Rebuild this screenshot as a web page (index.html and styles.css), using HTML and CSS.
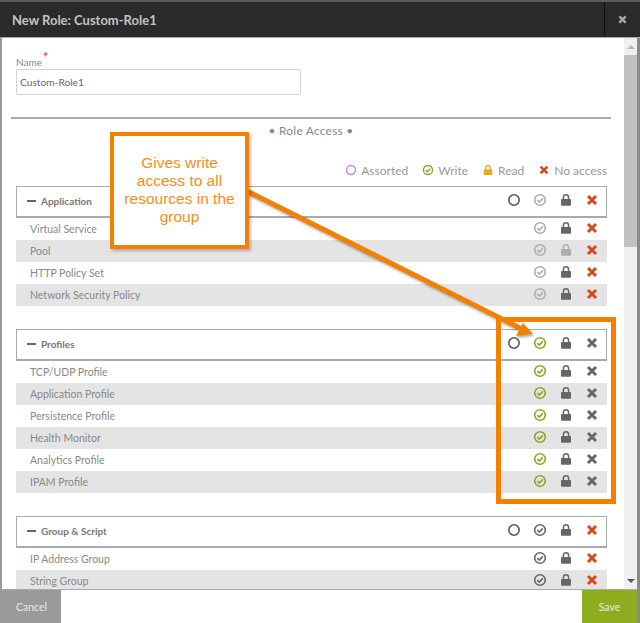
FILE: index.html
```html
<!DOCTYPE html>
<html lang="en">
<head>
    <meta charset="UTF-8">
    <meta name="viewport" content="width=device-width, initial-scale=1.0">
    <title>New Role: Custom-Role1</title>
    <link rel="stylesheet" href="styles.css">
</head>
<body>
    <svg class="defs" width="0" height="0">
        <symbol id="ring" viewBox="0 0 14 14"><circle cx="7" cy="7" r="5.2" fill="none" stroke="currentColor" stroke-width="1.6"/></symbol>
        <symbol id="check" viewBox="0 0 14 14"><circle cx="7" cy="7" r="5.3" fill="none" stroke="currentColor" stroke-width="1.6"/><path d="M4.3 7.1l2 2 3.5-3.7" fill="none" stroke="currentColor" stroke-width="1.6"/></symbol>
        <symbol id="lock" viewBox="0 0 14 14"><path d="M4.4 7V4.4a2.6 2.6 0 0 1 5.2 0V7" fill="none" stroke="currentColor" stroke-width="1.5"/><rect x="2" y="6" width="10" height="6.8" rx="0.8" fill="currentColor"/></symbol>
        <symbol id="cross" viewBox="0 0 14 14"><path d="M3 3l8 8M11 3l-8 8" fill="none" stroke="currentColor" stroke-width="3"/></symbol>
    </svg>

    <div class="modal">
        <header class="title-bar">
            <h1>New Role: Custom-Role1</h1>
            <div class="close"><svg class="icon"><use href="#cross"/></svg></div>
        </header>

        <div class="middle">
            <main class="content">
                <label class="field-label" for="role-name">Name<span class="required">*</span></label>
                <input class="field-input" id="role-name" type="text" value="Custom-Role1">

                <div class="section-title">• Role Access •</div>

                <div class="legend">
                    <span class="legend-item"><svg class="icon purple"><use href="#ring"/></svg>Assorted</span>
                    <span class="legend-item"><svg class="icon green"><use href="#check"/></svg>Write</span>
                    <span class="legend-item"><svg class="icon amber"><use href="#lock"/></svg>Read</span>
                    <span class="legend-item"><svg class="icon red"><use href="#cross"/></svg>No access</span>
                </div>

                <section class="group">
                    <div class="group-head">
                        <span class="dash"></span><span class="group-name">Application</span>
                        <div class="icons"><svg class="icon dark"><use href="#ring"/></svg><svg class="icon pale"><use href="#check"/></svg><svg class="icon mid"><use href="#lock"/></svg><svg class="icon red"><use href="#cross"/></svg></div>
                    </div>
                    <div class="row"><span>Virtual Service</span><div class="icons"><svg class="icon pale"><use href="#check"/></svg><svg class="icon mid"><use href="#lock"/></svg><svg class="icon red"><use href="#cross"/></svg></div></div>
                    <div class="row"><span>Pool</span><div class="icons"><svg class="icon pale"><use href="#check"/></svg><svg class="icon pale"><use href="#lock"/></svg><svg class="icon red"><use href="#cross"/></svg></div></div>
                    <div class="row"><span>HTTP Policy Set</span><div class="icons"><svg class="icon pale"><use href="#check"/></svg><svg class="icon mid"><use href="#lock"/></svg><svg class="icon red"><use href="#cross"/></svg></div></div>
                    <div class="row"><span>Network Security Policy</span><div class="icons"><svg class="icon pale"><use href="#check"/></svg><svg class="icon mid"><use href="#lock"/></svg><svg class="icon red"><use href="#cross"/></svg></div></div>
                </section>

                <section class="group">
                    <div class="group-head">
                        <span class="dash"></span><span class="group-name">Profiles</span>
                        <div class="icons"><svg class="icon dark"><use href="#ring"/></svg><svg class="icon green"><use href="#check"/></svg><svg class="icon mid"><use href="#lock"/></svg><svg class="icon mid"><use href="#cross"/></svg></div>
                    </div>
                    <div class="row"><span>TCP/UDP Profile</span><div class="icons"><svg class="icon green"><use href="#check"/></svg><svg class="icon mid"><use href="#lock"/></svg><svg class="icon mid"><use href="#cross"/></svg></div></div>
                    <div class="row"><span>Application Profile</span><div class="icons"><svg class="icon green"><use href="#check"/></svg><svg class="icon mid"><use href="#lock"/></svg><svg class="icon mid"><use href="#cross"/></svg></div></div>
                    <div class="row"><span>Persistence Profile</span><div class="icons"><svg class="icon green"><use href="#check"/></svg><svg class="icon mid"><use href="#lock"/></svg><svg class="icon mid"><use href="#cross"/></svg></div></div>
                    <div class="row"><span>Health Monitor</span><div class="icons"><svg class="icon green"><use href="#check"/></svg><svg class="icon mid"><use href="#lock"/></svg><svg class="icon mid"><use href="#cross"/></svg></div></div>
                    <div class="row"><span>Analytics Profile</span><div class="icons"><svg class="icon green"><use href="#check"/></svg><svg class="icon mid"><use href="#lock"/></svg><svg class="icon mid"><use href="#cross"/></svg></div></div>
                    <div class="row"><span>IPAM Profile</span><div class="icons"><svg class="icon green"><use href="#check"/></svg><svg class="icon mid"><use href="#lock"/></svg><svg class="icon mid"><use href="#cross"/></svg></div></div>
                </section>

                <section class="group">
                    <div class="group-head">
                        <span class="dash"></span><span class="group-name">Group &amp; Script</span>
                        <div class="icons"><svg class="icon dark"><use href="#ring"/></svg><svg class="icon mid"><use href="#check"/></svg><svg class="icon mid"><use href="#lock"/></svg><svg class="icon red"><use href="#cross"/></svg></div>
                    </div>
                    <div class="row"><span>IP Address Group</span><div class="icons"><svg class="icon mid"><use href="#check"/></svg><svg class="icon mid"><use href="#lock"/></svg><svg class="icon red"><use href="#cross"/></svg></div></div>
                    <div class="row"><span>String Group</span><div class="icons"><svg class="icon mid"><use href="#check"/></svg><svg class="icon mid"><use href="#lock"/></svg><svg class="icon red"><use href="#cross"/></svg></div></div>
                </section>
            </main>

            <div class="scrollbar">
                <span class="arrow-up"></span>
                <div class="thumb"></div>
                <span class="arrow-down"></span>
            </div>
        </div>

        <footer class="footer">
            <button class="btn btn-cancel" type="button">Cancel</button>
            <button class="btn btn-save" type="button">Save</button>
        </footer>
    </div>

    <!-- annotations drawn over the screenshot -->
    <svg class="pointer" width="640" height="623" viewBox="0 0 640 623">
        <path class="pointer-line" d="M247 191L522 329"/>
        <path class="pointer-head" d="M533 334L523 323L516 336Z"/>
    </svg>
    <div class="callout">Gives write access to all resources in the group</div>
    <div class="highlight"></div>
</body>
</html>
```

FILE: styles.css
```css
* {
    box-sizing: border-box;
}
html, body {
    margin: 0;
    padding: 0;
    height: 100%;
    overflow: hidden;
}
body {
    position: relative;
    font-family: Lato, "Open Sans", sans-serif;
    color: #888;
    background: #fff;
}
.defs {
    position: absolute;
}
.modal {
    display: flex;
    flex-direction: column;
    height: 623px;
    border-left: 2px solid #999;
    border-right: 3px solid #8a8a8a;
}
.title-bar {
    display: flex;
    align-items: center;
    justify-content: space-between;
    flex: none;
    height: 38px;
    margin: 0 -3px 0 -2px;
    padding-left: 12px;
    background: #2a2a2a;
    border-top: 2px solid #5a5a5a;
    border-bottom: 1px solid #aaa;
}
.title-bar h1 {
    margin: 0;
    font-size: 13px;
    font-weight: 700;
    color: #c4c4c4;
}
.close {
    display: flex;
    align-items: center;
    justify-content: center;
    width: 36px;
    height: 100%;
    border-left: 1px solid #111;
    color: #aaa;
}
.close .icon {
    width: 11px;
    height: 11px;
}
.middle {
    display: flex;
    flex: 1;
    min-height: 0;
}
.content {
    flex: 1;
    min-width: 0;
    overflow: hidden;
    padding: 17px 17px 0 14px;
}
.field-label {
    display: block;
    height: 14px;
    font-size: 10px;
    line-height: 15px;
    color: #888;
}
.required {
    position: relative;
    top: -4px;
    margin-left: 1px;
    font-size: 13px;
    line-height: 0;
    color: #e8233a;
}
.field-input {
    display: block;
    width: 285px;
    height: 26px;
    padding: 0 3px;
    border: 1px solid #d4d4d4;
    border-radius: 2px;
    font-family: inherit;
    font-size: 10.2px;
    color: #666;
}
.section-title {
    height: 36px;
    margin: 22px -4px 0 -5px;
    border-top: 2px solid #aaa;
    padding-top: 3px;
    font-size: 12px;
    line-height: 18px;
    letter-spacing: 0.2px;
    text-align: center;
    color: #888;
}
.legend {
    display: flex;
    justify-content: flex-end;
    align-items: center;
    gap: 14px;
    height: 18px;
    margin-top: 8px;
    font-size: 12px;
    color: #999;
}
.legend-item {
    display: flex;
    align-items: center;
    gap: 4px;
}
.legend .icon {
    width: 12px;
    height: 12px;
}
.group {
    margin-top: 23px;
}
.legend + .group {
    margin-top: 7px;
}
.group-head {
    display: flex;
    align-items: center;
    height: 32px;
    padding: 0 0 1px 10px;
    border: 1px solid #aaa;
    border-bottom-width: 2px;
    font-size: 10px;
    font-weight: 700;
    color: #777;
}
.dash {
    width: 9px;
    height: 2px;
    margin-right: 5px;
    background: #666;
}
.group-name {
    flex: 1;
}
.row {
    display: flex;
    align-items: center;
    justify-content: space-between;
    height: 22px;
    padding-left: 14px;
    font-size: 10.5px;
    color: #888;
}
.row:nth-child(odd) {
    background: #e4e4e4;
}
.icons {
    display: flex;
    justify-content: flex-end;
    gap: 12px;
    padding-right: 7px;
    margin-bottom: 2px;
}
.row .icons {
    padding-right: 8px;
    margin-bottom: 3px;
}
.icon {
    display: block;
    flex: none;
    width: 14px;
    height: 14px;
}
.dark { color: #5a5a5a; }
.mid { color: #666; }
.pale { color: #aeaeae; }
.green { color: #8ba626; }
.red { color: #d9481c; }
.purple { color: #b884ea; }
.amber { color: #e6a91e; }
.scrollbar {
    display: flex;
    flex-direction: column;
    align-items: center;
    flex: none;
    width: 13px;
    background: #f0f0f0;
    padding: 7px 0 6px;
}
.arrow-up, .arrow-down {
    flex: none;
    width: 0;
    height: 0;
    border-left: 4px solid transparent;
    border-right: 4px solid transparent;
}
.arrow-up {
    border-bottom: 4px solid #b5b5b5;
}
.arrow-down {
    margin-top: auto;
    border-top: 4px solid #555;
}
.thumb {
    flex: none;
    align-self: stretch;
    height: 192px;
    margin-top: 6px;
    background: #c1c1c1;
}
.footer {
    display: flex;
    justify-content: space-between;
    flex: none;
    height: 34px;
    background: #fff;
    border-top: 1px solid #aaa;
}
.btn {
    border: none;
    font-family: inherit;
    font-size: 10.5px;
    color: #e8e8e8;
}
.btn-cancel {
    width: 59px;
    background: #9a9a9a;
}
.btn-save {
    width: 55px;
    background: #8fab1e;
}
.callout {
    position: absolute;
    left: 110px;
    top: 132px;
    display: flex;
    align-items: center;
    justify-content: center;
    width: 139px;
    height: 117px;
    padding: 0 6px 2px;
    border: 4px solid #f57f00;
    background: #fff;
    box-shadow: 2px 2px 3px rgba(0, 0, 0, 0.25);
    font-family: "Liberation Sans", Arial, sans-serif;
    font-size: 15.5px;
    line-height: 18px;
    text-align: center;
    color: #f88c1c;
}
.pointer {
    position: absolute;
    left: 0;
    top: 0;
    filter: drop-shadow(1px 2px 1px rgba(0, 0, 0, 0.3));
}
.pointer-line {
    fill: none;
    stroke: #f57f00;
    stroke-width: 5;
}
.pointer-head {
    fill: #f57f00;
}
.highlight {
    position: absolute;
    left: 496px;
    top: 317px;
    width: 120px;
    height: 187px;
    border: 5px solid #f57f00;
}
```
